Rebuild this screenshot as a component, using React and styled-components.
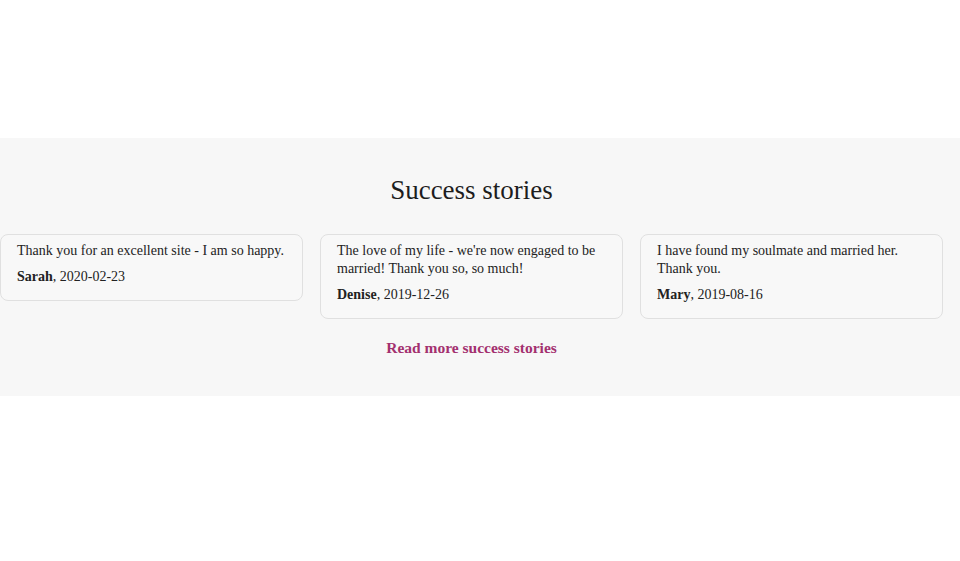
import React from 'react';
import styled, {createGlobalStyle} from "styled-components";

const GlobalStyle = createGlobalStyle`
  body {
    margin: 0;
    background: #fff;
    font-family: "Liberation Serif", "DejaVu Serif", serif;
    color: #222;
  }
`;

const Section = styled.section`
  margin-top: 138px;
  background: #f7f7f7;
  padding: 34px 0 39px;
`;
const Container = styled.div`
  width: 943px;
  text-align: center;
`;
const Title = styled.h2`
  margin: 0 0 26px;
  font-family: "Liberation Serif", serif;
  font-weight: 400;
  font-size: 27px;
  line-height: 36px;
  color: #1d1d1d;
`;
const Cards = styled.div`
  display: flex;
  align-items: flex-start;
  gap: 17px;
  text-align: left;
`;
const Card = styled.div`
  flex: 1;
  box-sizing: border-box;
  border: 1px solid #e0e0e0;
  border-radius: 8px;
  background: #f8f8f8;
  padding: 7px 16px 14px;
  font-size: 14px;
  line-height: 18px;
`;
const Quote = styled.p`
  margin: 0 0 8px;
`;
const Author = styled.div`
  b {
    font-weight: 700;
  }
`;
const MoreLink = styled.a`
  display: inline-block;
  margin-top: 20px;
  font-size: 15.5px;
  font-weight: 700;
  color: #a3306f;
  text-decoration: none;
`;

const stories = [
    {text: 'Thank you for an excellent site - I am so happy.', name: 'Sarah', date: '2020-02-23'},
    {text: "The love of my life - we're now engaged to be married! Thank you so, so much!", name: 'Denise', date: '2019-12-26'},
    {text: 'I have found my soulmate and married her. Thank you.', name: 'Mary', date: '2019-08-16'},
];

const App = () => (
    <>
        <GlobalStyle/>
        <Section>
            <Container>
                <Title>Success stories</Title>
                <Cards>
                    {stories.map(story => (
                        <Card key={story.name}>
                            <Quote>{story.text}</Quote>
                            <Author><b>{story.name}</b>, {story.date}</Author>
                        </Card>
                    ))}
                </Cards>
                <MoreLink href="#">Read more success stories</MoreLink>
            </Container>
        </Section>
    </>
);

export default App;
